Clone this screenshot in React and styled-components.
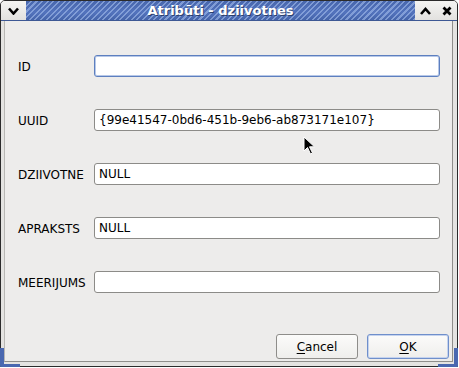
import React from 'react'
import styled, { createGlobalStyle, css } from 'styled-components'

const GlobalStyle = createGlobalStyle`
  html, body {
    margin: 0;
    padding: 0;
    background: #ffffff;
    font-family: "DejaVu Sans", "Liberation Sans", sans-serif;
  }
`

const Frame = styled.div`
  position: relative;
  width: 458px;
  height: 367px;
  box-sizing: border-box;
  border: 1px solid #2b2b2b;
  border-radius: 5px 5px 0 0;
  background: #e4e3e1;
  display: flex;
  flex-direction: column;
`

const TitleBar = styled.div`
  height: 19px;
  display: flex;
  align-items: stretch;
  border-bottom: 1px solid #3d5894;
`

const FrameButton = styled.div`
  width: ${p => p.$w || 22}px;
  display: flex;
  align-items: center;
  justify-content: center;
  background: linear-gradient(#f4f4f2, #e2e1df);
  border-radius: ${p => p.$radius || '0'};
`

const Title = styled.div`
  flex: 1;
  display: flex;
  align-items: center;
  justify-content: center;
  color: #ffffff;
  font-weight: bold;
  font-size: 13px;
  text-shadow: 1px 1px 0 #2c3f6c;
  background:
    repeating-linear-gradient(
      -45deg,
      rgba(170, 195, 240, 0.55) 0px,
      rgba(170, 195, 240, 0.55) 1.5px,
      rgba(255, 255, 255, 0) 1.5px,
      rgba(255, 255, 255, 0) 4px
    ),
    linear-gradient(#4867ad, #5373bd 60%, #4564aa);
`

const Body = styled.div`
  flex: 1;
  margin: 0 4px 4px 3px;
  border-left: 1px solid #b8b7b4;
  border-right: 1px solid #8f8e8b;
  border-bottom: 1px solid #8f8e8b;
  background: #edeceb;
  display: flex;
  flex-direction: column;
  padding: 34px 11px 0 13px;
`

const Form = styled.div`
  display: grid;
  grid-template-columns: 76px 346px;
  row-gap: 32px;
  align-items: center;
`

const Label = styled.div`
  font-size: 12px;
  color: #000;
  padding-top: 1px;
`

const Field = styled.div`
  height: 22px;
  box-sizing: border-box;
  background: #ffffff;
  border: 1px solid #8c8b88;
  border-radius: 3px;
  font-size: 12px;
  color: #000;
  padding-left: 4px;
  display: flex;
  align-items: center;
  white-space: nowrap;
  ${p => p.$focused && css`
    border-color: #5d7fbf;
    box-shadow: inset 0 0 0 1px #b7c8e8;
  `}
`

const Buttons = styled.div`
  margin-top: auto;
  margin-right: -8px;
  margin-bottom: 2px;
  display: flex;
  justify-content: flex-end;
  gap: 9px;
`

const Button = styled.div`
  width: 82px;
  height: 25px;
  box-sizing: border-box;
  border: 1px solid #8e8d8a;
  border-radius: 3px;
  background: linear-gradient(#fbfbfa, #efeeec);
  font-size: 12px;
  color: #000;
  display: flex;
  align-items: center;
  justify-content: center;
  ${p => p.$default && css`
    border-color: #6f8fcb;
    box-shadow: inset 0 0 0 1px #c5d3ee;
  `}
  u {
    text-decoration: underline;
    text-underline-offset: 2px;
  }
`

const Corner = styled.div`
  position: absolute;
  bottom: -1px;
  width: 20px;
  height: 19px;
  box-sizing: border-box;
  border-bottom: 3px solid #4a68b0;
  ${p => p.$side === 'left' ? css`
    left: -1px;
    border-left: 4px solid #4a68b0;
    border-bottom-left-radius: 2px;
  ` : css`
    right: -1px;
    border-right: 4px solid #4a68b0;
    border-bottom-right-radius: 2px;
  `}
`

const Pointer = styled.svg`
  position: absolute;
  left: 302px;
  top: 135px;
`

const Chevron = ({ up }) => (
  <svg width="11" height="8" viewBox="0 0 11 8">
    <path
      d={up ? 'M1 7 L5.5 2 L10 7' : 'M1 1.5 L5.5 6.5 L10 1.5'}
      fill="none"
      stroke="#000"
      strokeWidth="2.6"
    />
  </svg>
)

const Cross = () => (
  <svg width="10" height="10" viewBox="0 0 10 10">
    <path d="M1.5 1.5 L8.5 8.5 M8.5 1.5 L1.5 8.5" stroke="#000" strokeWidth="2.8" />
  </svg>
)

const fields = [
  { label: 'ID', value: '', focused: true },
  { label: 'UUID', value: '{99e41547-0bd6-451b-9eb6-ab873171e107}' },
  { label: 'DZIIVOTNE', value: 'NULL' },
  { label: 'APRAKSTS', value: 'NULL' },
  { label: 'MEERIJUMS', value: '' },
]

export default function App() {
  return (
    <>
      <GlobalStyle />
      <Frame>
        <TitleBar>
          <FrameButton $w={25} $radius="4px 0 0 0">
            <Chevron />
          </FrameButton>
          <Title>Atribūti - dziivotnes</Title>
          <FrameButton $w={21}>
            <Chevron up />
          </FrameButton>
          <FrameButton $w={21} $radius="0 4px 0 0">
            <Cross />
          </FrameButton>
        </TitleBar>
        <Body>
          <Form>
            {fields.map(f => (
              <React.Fragment key={f.label}>
                <Label>{f.label}</Label>
                <Field $focused={f.focused}>{f.value}</Field>
              </React.Fragment>
            ))}
          </Form>
          <Buttons>
            <Button><span><u>C</u>ancel</span></Button>
            <Button $default><span><u>O</u>K</span></Button>
          </Buttons>
        </Body>
        <Corner $side="left" />
        <Corner $side="right" />
        <Pointer width="13" height="20" viewBox="0 0 13 20">
          <path
            d="M1 1 L1 15 L4.5 11.5 L7.5 18 L9.5 17 L6.5 10.8 L11.5 10.8 Z"
            fill="#000"
            stroke="#fff"
            strokeWidth="1"
          />
        </Pointer>
      </Frame>
    </>
  )
}
